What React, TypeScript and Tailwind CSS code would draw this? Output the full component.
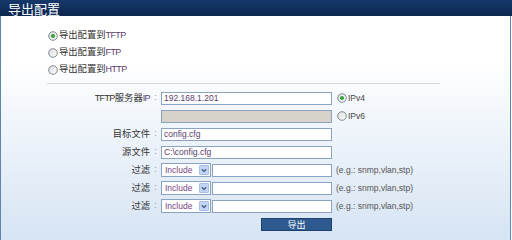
import React from "react";

const CJK = { fontFamily: '"Noto Sans CJK SC", "Noto Sans", sans-serif' };
const LAT = { fontFamily: '"Liberation Sans", Arial, sans-serif' };

function Lat({ children, color = "text-[#5a3c6c]" }: { children: React.ReactNode; color?: string }) {
  return (
    <span className={`text-[9px] tracking-[-0.6px] ${color}`} style={LAT}>
      {children}
    </span>
  );
}

function Radio({ checked }: { checked?: boolean }) {
  return (
    <svg width="10" height="10" viewBox="0 0 10 10" className="shrink-0">
      <defs>
        <linearGradient id="rg" x1="0" y1="0" x2="1" y2="1">
          <stop offset="0" stopColor="#dcdcd8" />
          <stop offset="1" stopColor="#ffffff" />
        </linearGradient>
      </defs>
      <circle cx="5" cy="5" r="4.3" fill="url(#rg)" stroke="#6f7f8f" strokeWidth="0.9" />
      {checked && <circle cx="5" cy="5" r="2.1" fill="#3aa23a" />}
    </svg>
  );
}

function Row({ label, children }: { label: React.ReactNode; children: React.ReactNode }) {
  return (
    <div className="flex h-[18px] items-center">
      <div className="w-[149px] text-right text-[9.3px] text-[#333]" style={CJK}>
        {label}
      </div>
      <div className="w-[11px] text-center text-[9px] text-[#999]" style={LAT}>
        :
      </div>
      {children}
    </div>
  );
}

function TextBox({ value, gray, w = "w-[171px]" }: { value?: string; gray?: boolean; w?: string }) {
  return (
    <div
      className={`${w} h-[13px] border border-[#8aa3c2] flex items-center pl-[2px] text-[8.5px] ${
        gray ? "bg-[#d6d2ca]" : "bg-white"
      } text-[#5a3c6c]`}
      style={LAT}
    >
      {value}
    </div>
  );
}

function Select() {
  return (
    <div className="w-[50px] h-[14px] border border-[#8aa3c2] bg-white flex items-center justify-between pl-[3px] pr-[1px]">
      <span className="text-[8.5px] text-[#7a3f86]" style={LAT}>
        Include
      </span>
      <div className="w-[10px] h-[10px] rounded-[1px] bg-[#c2d5f4] border border-[#a9c0e6] flex items-center justify-center">
        <svg width="6" height="5" viewBox="0 0 6 5">
          <path d="M0.8 1.2 L3 3.5 L5.2 1.2" fill="none" stroke="#4d5f8a" strokeWidth="1.3" />
        </svg>
      </div>
    </div>
  );
}

function FilterRow() {
  return (
    <Row label="过滤">
      <Select />
      <div className="w-[1px]" />
      <TextBox w="w-[120px]" />
      <span className="ml-[4px] text-[8.5px] text-[#555]" style={LAT}>
        (e.g.: snmp,vlan,stp)
      </span>
    </Row>
  );
}

export default function App() {
  return (
    <div className="w-[512px] h-[240px] overflow-hidden flex flex-col">
      <div className="h-[16px] bg-gradient-to-b from-[#16386a] to-[#0b2750] flex items-center pl-[8px]">
        <span className="text-[13px] leading-none text-white" style={CJK}>
          导出配置
        </span>
      </div>
      <div className="flex-1 border-l border-r border-[#5d86b3] mr-[1px] bg-gradient-to-b from-white from-[20%] to-[#d6e4f3]">
        <div className="pt-[11px] pl-[47px] flex flex-col">
          {[
            ["导出配置到", "TFTP", true],
            ["导出配置到", "FTP", false],
            ["导出配置到", "HTTP", false],
          ].map(([a, b, c], i) => (
            <div key={i} className="h-[17px] flex items-center gap-[1px]">
              <Radio checked={c as boolean} />
              <span className="text-[9.3px] text-[#333]" style={CJK}>
                {a as string}
                <Lat>{b as string}</Lat>
              </span>
            </div>
          ))}
        </div>
        <div className="mt-[5px] ml-[46px] w-[393px] h-[1px] bg-[#d3dae2]" />
        <div className="mt-[5px] flex flex-col">
          <Row
            label={
              <>
                <Lat color="text-[#333]">TFTP</Lat>服务器<Lat>IP</Lat>
              </>
            }
          >
            <TextBox value="192.168.1.201" />
            <div className="ml-[5px] flex items-center gap-[1px]">
              <Radio checked />
              <span className="text-[8.5px] text-[#444]" style={LAT}>
                IPv4
              </span>
            </div>
          </Row>
          <div className="flex h-[18px] items-center">
            <div className="w-[160px]" />
            <TextBox gray />
            <div className="ml-[5px] flex items-center gap-[1px]">
              <Radio />
              <span className="text-[8.5px] text-[#444]" style={LAT}>
                IPv6
              </span>
            </div>
          </div>
          <Row label="目标文件">
            <TextBox value="config.cfg" />
          </Row>
          <Row label="源文件">
            <TextBox value="C:\config.cfg" />
          </Row>
          <FilterRow />
          <FilterRow />
          <FilterRow />
          <div className="flex h-[18px] items-center">
            <div className="w-[260px]" />
            <div className="w-[71px] h-[13px] bg-[#2e5a90] border border-[#1f416d] flex items-center justify-center">
              <span className="text-[9px] leading-none text-white" style={CJK}>
                导出
              </span>
            </div>
          </div>
        </div>
      </div>
    </div>
  );
}
